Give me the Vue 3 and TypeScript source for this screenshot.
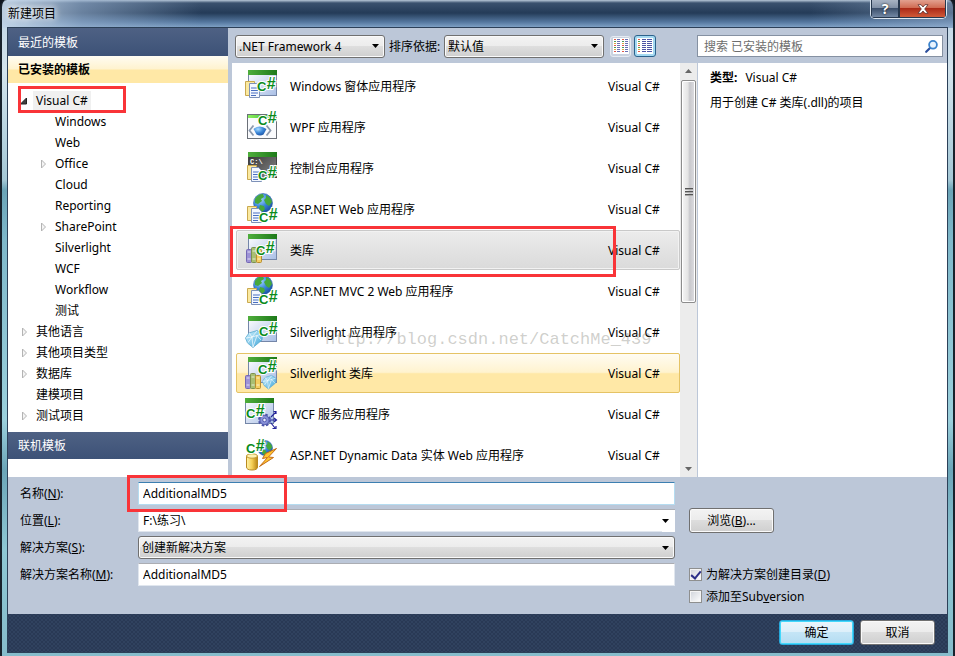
<script setup lang="ts">
import { ref } from 'vue'

interface TreeNode {
  label: string
  level: number
  state: 'open' | 'closed' | 'leaf'
}

interface Template {
  name: string
  icon: string
}

const tree: TreeNode[] = [
  { label: 'Visual C#', level: 0, state: 'open' },
  { label: 'Windows', level: 1, state: 'leaf' },
  { label: 'Web', level: 1, state: 'leaf' },
  { label: 'Office', level: 1, state: 'closed' },
  { label: 'Cloud', level: 1, state: 'leaf' },
  { label: 'Reporting', level: 1, state: 'leaf' },
  { label: 'SharePoint', level: 1, state: 'closed' },
  { label: 'Silverlight', level: 1, state: 'leaf' },
  { label: 'WCF', level: 1, state: 'leaf' },
  { label: 'Workflow', level: 1, state: 'leaf' },
  { label: '测试', level: 1, state: 'leaf' },
  { label: '其他语言', level: 0, state: 'closed' },
  { label: '其他项目类型', level: 0, state: 'closed' },
  { label: '数据库', level: 0, state: 'closed' },
  { label: '建模项目', level: 0, state: 'leaf' },
  { label: '测试项目', level: 0, state: 'closed' },
]

const templates: Template[] = [
  { name: 'Windows 窗体应用程序', icon: 'forms' },
  { name: 'WPF 应用程序', icon: 'wpf' },
  { name: '控制台应用程序', icon: 'console' },
  { name: 'ASP.NET Web 应用程序', icon: 'web' },
  { name: '类库', icon: 'library' },
  { name: 'ASP.NET MVC 2 Web 应用程序', icon: 'web' },
  { name: 'Silverlight 应用程序', icon: 'silverlight' },
  { name: 'Silverlight 类库', icon: 'silverlib' },
  { name: 'WCF 服务应用程序', icon: 'wcf' },
  { name: 'ASP.NET Dynamic Data 实体 Web 应用程序', icon: 'dynamic' },
]

// x and baseline of the language mark on each icon
const mark: Record<string, [number, number]> = {
  forms: [12, 21],
  wpf: [13, 14],
  console: [13, 28],
  web: [14, 29],
  library: [11, 21],
  silverlight: [14, 20],
  silverlib: [13, 17],
  wcf: [1, 20],
  dynamic: [1, 14],
}

const selected = ref(4)
const hovered = 7
const projectName = ref('AdditionalMD5')
const location = ref('F:\\练习\\')
const solutionName = ref('AdditionalMD5')
const makeDirectory = ref(true)
const addToSubversion = ref(false)
</script>

<template>
  <div class="window">
    <svg class="defs" width="0" height="0" aria-hidden="true">
      <defs>
        <linearGradient id="pane" x1="0" y1="0" x2="1" y2="1">
          <stop offset="0" stop-color="#ffffff" /><stop offset="1" stop-color="#a9bfe6" />
        </linearGradient>
        <linearGradient id="bar" x1="0" y1="0" x2="1" y2="0">
          <stop offset="0" stop-color="#4fae3c" /><stop offset="1" stop-color="#1e7a1a" />
        </linearGradient>
        <linearGradient id="barLight" x1="0" y1="0" x2="1" y2="0">
          <stop offset="0" stop-color="#8cf060" /><stop offset="1" stop-color="#2fae20" />
        </linearGradient>
        <linearGradient id="dark" x1="0" y1="0" x2="1" y2="1">
          <stop offset="0" stop-color="#303030" /><stop offset="1" stop-color="#8a8a8a" />
        </linearGradient>
        <radialGradient id="globe" cx="0.35" cy="0.3" r="0.8">
          <stop offset="0" stop-color="#a8dcff" /><stop offset="0.5" stop-color="#3b86d8" /><stop offset="1" stop-color="#174a9c" />
        </radialGradient>
        <linearGradient id="gem" x1="0" y1="0" x2="1" y2="1">
          <stop offset="0" stop-color="#d4f3ff" /><stop offset="1" stop-color="#3ba4d8" />
        </linearGradient>
        <linearGradient id="gold" x1="0" y1="0" x2="1" y2="0">
          <stop offset="0" stop-color="#fff3a8" /><stop offset="0.5" stop-color="#f5cf55" /><stop offset="1" stop-color="#b98412" />
        </linearGradient>
        <g id="docs">
          <path d="M.5 3.500h9v14h-9z" fill="#fbe9a0" stroke="#c9a950" />
          <path d="M4.500 5.500h7l3 3v11h-10z" fill="#f4f8ff" stroke="#7d91b8" />
          <path d="M6 10h7M6 12.500h7M6 15h7M6 17.500h5" stroke="#4a6fc0" />
        </g>
        <g id="books">
          <rect x=".5" y="2.500" width="5" height="13" rx="1" fill="#9d92d6" stroke="#7468b4" />
          <rect x="5.500" y=".5" width="5" height="15" rx="1" fill="#a9bf72" stroke="#7c9150" />
          <rect x="10.500" y="2.500" width="5" height="13" rx="1" fill="#f3cf62" stroke="#b98d30" />
          <path d="M1.500 5h3M1.500 12h3M6.500 4h3M6.500 12h3M11.500 5h3M11.500 12h3" stroke="#fff" stroke-opacity=".7" />
        </g>
        <g id="diamond">
          <path d="M.5 8 4 3 12 .5 17.500 4 17 10 8 17.500 2.500 13z" fill="url(#gem)" stroke="#58a9cf" stroke-width=".8" />
          <path d="M1 8 7 7 17 4M4 3 7 7 12 1M7 7 8 17 12 5.500 16 10M7 7 3 12.500" fill="none" stroke="#fff" stroke-width=".8" stroke-opacity=".85" />
        </g>
        <g id="earth">
          <circle cx="10" cy="10" r="9.500" fill="url(#globe)" stroke="#2b62a8" stroke-width=".6" />
          <path d="M2 6q3-5 8-5l1 3-3 2 1 2-4 3-3-1zM13 2q5 2 6 7l-3 4-3-2-2-4 2-2zM7 12l4 1 1 3-3 3-3-3z" fill="#46a83c" />
        </g>
      </defs>
    </svg>

    <header class="title-bar">
      <h1>新建项目</h1>
      <div class="caption-buttons">
        <button type="button" class="help" aria-label="帮助">?</button>
        <button type="button" class="close" aria-label="关闭">
          <svg width="12" height="10" viewBox="0 0 12 10"><path d="M1 .7h3l2 2.300 2-2.300h3L7.700 5 11 9.300H8L6 7 4 9.300H1L4.300 5z" fill="#fff" stroke="#5c3030" stroke-width=".8" /></svg>
        </button>
      </div>
    </header>

    <div class="dialog">
      <div class="main">
        <aside class="sidebar">
          <button type="button" class="section">最近的模板</button>
          <button type="button" class="section current">已安装的模板</button>
          <ul class="tree">
            <li v-for="(node, i) in tree" :key="node.label" :class="['node', 'level-' + node.level]">
              <svg class="arrow" width="8" height="10" viewBox="0 0 8 10" aria-hidden="true">
                <path v-if="node.state === 'open'" d="M6.500 2v6H.5z" fill="#404040" stroke="#222" />
                <path v-if="node.state === 'closed'" d="M2.500 1v8l4-4z" fill="#f4f4f4" stroke="#b4b4b4" />
              </svg>
              <button type="button" :class="{ active: i === 0 }">{{ node.label }}</button>
              <span v-if="i === 0" class="mark-box tree-mark"></span>
            </li>
          </ul>
          <button type="button" class="section">联机模板</button>
          <div class="rest"></div>
        </aside>

        <div class="content">
          <div class="toolbar">
            <span class="select framework">
              <select aria-label="框架版本"><option>.NET Framework 4</option></select>
              <svg width="7" height="4" viewBox="0 0 7 4"><path d="M0 0h7L3.500 4z" /></svg>
            </span>
            <label for="sort">排序依据:</label>
            <span class="select sort">
              <select id="sort"><option>默认值</option></select>
              <svg width="7" height="4" viewBox="0 0 7 4"><path d="M0 0h7L3.500 4z" /></svg>
            </span>
            <button type="button" class="view" aria-label="小图标">
              <svg width="16" height="16" viewBox="0 0 16 16">
                <rect width="16" height="16" fill="#fff" />
                <path d="M1 1.500h2M9 1.500h2M1 13.500h2M9 13.500h2M1 7.500h2M9 7.500h2" stroke="#e05a4a" />
                <path d="M1 3.500h2M9 3.500h2M1 9.500h2M9 9.500h2" stroke="#4e9b57" />
                <path d="M1 5.500h2M9 5.500h2M1 11.500h2M9 11.500h2" stroke="#d9a93c" />
                <path d="M4 1.500h3M4 3.500h3M4 5.500h3M4 7.500h3M4 9.500h3M4 11.500h3M4 13.500h3M12 1.500h3M12 3.500h3M12 5.500h3M12 7.500h3M12 9.500h3M12 11.500h3M12 13.500h3" stroke="#6a70b4" />
              </svg>
            </button>
            <button type="button" class="view on" aria-label="中等图标">
              <svg width="16" height="16" viewBox="0 0 16 16">
                <rect width="16" height="16" fill="#fff" />
                <path d="M1 1.500h2M1 7.500h2M1 13.500h2" stroke="#e05a4a" />
                <path d="M1 3.500h2M1 9.500h2" stroke="#4e9b57" />
                <path d="M1 5.500h2M1 11.500h2" stroke="#d9a93c" />
                <path d="M5 1.500h4M5 3.500h4M5 5.500h4M5 7.500h4M5 9.500h4M5 11.500h4M5 13.500h4M10 1.500h5M10 3.500h5M10 5.500h5M10 7.500h5M10 9.500h5M10 11.500h5M10 13.500h5" stroke="#4d55a4" />
              </svg>
            </button>
            <div class="search">
              <input type="search" placeholder="搜索 已安装的模板" aria-label="搜索已安装的模板" />
              <svg width="13" height="13" viewBox="0 0 13 13" aria-hidden="true">
                <path d="M5.500 7.500 1.200 11.800" stroke="#2c4f9c" stroke-width="2.200" stroke-linecap="round" />
                <circle cx="8" cy="4.800" r="3.900" fill="#e8f4ff" stroke="#3b83cc" stroke-width="1.800" />
              </svg>
            </div>
          </div>

          <div class="panes">
            <div class="list-pane">
              <ul class="templates">
                <li v-for="(t, i) in templates" :key="t.name">
                  <button type="button" :class="['item', { selected: i === selected, hovered: i === hovered }]" @click="selected = i">
                    <svg class="icon" width="32" height="32" viewBox="0 0 32 32" aria-hidden="true">
                      <g v-if="['forms', 'library', 'silverlight', 'silverlib', 'wcf'].includes(t.icon)">
                        <rect :x="t.icon === 'wcf' ? 0.5 : 3.5" y=".5" width="28" height="25" fill="url(#pane)" stroke="#7486a8" />
                        <rect :x="t.icon === 'wcf' ? 0 : 3" y="0" width="29" height="5" fill="url(#bar)" />
                      </g>
                      <g v-else-if="t.icon === 'wpf'">
                        <rect x="2.500" y="3.500" width="29" height="24" fill="#fafbfd" stroke="#6b7078" />
                        <rect x="3" y="4" width="28" height="3" fill="url(#barLight)" />
                        <path d="M8.500 14.500 4.500 19.500l4 5M21.500 14.500l4 5-4 5" fill="none" stroke="#8b98ad" stroke-width="1.800" />
                        <path d="M8.500 18q6-5 13 0l-3 5.500q-3.500 2-7 0z" fill="url(#globe)" />
                      </g>
                      <g v-else-if="t.icon === 'console'">
                        <rect x="3.500" y=".5" width="28" height="25" fill="url(#dark)" stroke="#444" />
                        <rect x="3" y="0" width="29" height="5" fill="url(#bar)" />
                        <text x="5" y="12" class="prompt">C:\</text>
                      </g>
                      <use v-else-if="t.icon === 'web'" href="#earth" x="8" y="0" />
                      <use v-if="t.icon === 'forms'" href="#docs" x="0" y="8" />
                      <use v-if="t.icon === 'console' || t.icon === 'web'" href="#docs" x="2" y="10" />
                      <use v-if="t.icon === 'library'" href="#books" x="1" y="13" />
                      <use v-if="t.icon === 'silverlib'" href="#books" x="0" y="16" />
                      <use v-if="t.icon === 'silverlight'" href="#diamond" x="0" y="14" />
                      <g v-if="t.icon === 'silverlib'" transform="translate(17 18) scale(.8)"><use href="#diamond" /></g>
                      <g v-if="t.icon === 'dynamic'">
                        <g transform="translate(12 1) scale(.8)"><use href="#earth" /></g>
                        <path d="M1.500 17v11q0 3 5.500 3t5.500-3V17z" fill="url(#gold)" stroke="#b98a20" />
                        <ellipse cx="7" cy="17" rx="5.500" ry="2.200" fill="#fff2b0" stroke="#c39a35" />
                        <path d="m31.500 9.500-11 5-3 5 5-1-8 9 14-9-5-.5z" fill="#ffc52e" stroke="#c56b17" />
                      </g>
                      <g v-if="t.icon === 'wcf'">
                        <path d="M24 22h7M26 19l5-5M26 25l4 5M28.500 13.500H31V16M29 20l2.500 2-2.500 2M27.500 30.500H31V28" fill="none" stroke="#23239a" stroke-width="1.200" />
                        <circle cx="19.500" cy="22" r="5.200" fill="#9da5e4" stroke="#4c55a8" stroke-width="2.600" stroke-dasharray="2.400 1.700" />
                        <circle cx="19.500" cy="22" r="4.600" fill="#8790d8" stroke="#555eae" />
                        <circle cx="19.500" cy="22" r="1.800" fill="#eef" stroke="#555eae" />
                      </g>
                      <text :x="mark[t.icon][0]" :y="mark[t.icon][1]" class="sharp">C<tspan class="hash" dy="-2">#</tspan></text>
                    </svg>
                    <span class="name">{{ t.name }}</span>
                    <span class="lang">Visual C#</span>
                  </button>
                  <span v-if="i === 4" class="mark-box item-mark"></span>
                </li>
              </ul>
              <div class="scrollbar" aria-hidden="true">
                <svg width="7" height="4" viewBox="0 0 7 4"><path d="M0 4h7L3.500 0z" fill="#666" /></svg>
                <div class="thumb"><i></i><i></i><i></i></div>
                <svg class="down" width="7" height="4" viewBox="0 0 7 4"><path d="M0 0h7L3.500 4z" fill="#666" /></svg>
              </div>
              <span class="watermark">http://blog.csdn.net/CatchMe_439</span>
            </div>
            <section class="details">
              <p><strong>类型:</strong>Visual C#</p>
              <p>用于创建 C# 类库(.dll)的项目</p>
            </section>
          </div>
        </div>
      </div>

      <form class="form" @submit.prevent>
        <div class="fields">
          <label for="name">名称(<u>N</u>):</label>
          <div class="field">
            <input id="name" v-model="projectName" class="focused" type="text" />
            <span class="mark-box name-mark"></span>
          </div>
          <label for="location">位置(<u>L</u>):</label>
          <div class="field combo">
            <input id="location" v-model="location" type="text" />
            <button type="button" aria-label="展开位置">
              <svg width="7" height="4" viewBox="0 0 7 4"><path d="M0 0h7L3.500 4z" /></svg>
            </button>
          </div>
          <label for="solution">解决方案(<u>S</u>):</label>
          <span class="select solution">
            <select id="solution"><option>创建新解决方案</option></select>
            <svg width="7" height="4" viewBox="0 0 7 4"><path d="M0 0h7L3.500 4z" /></svg>
          </span>
          <label for="solution-name">解决方案名称(<u>M</u>):</label>
          <div class="field"><input id="solution-name" v-model="solutionName" type="text" /></div>
        </div>
        <div class="side">
          <button type="button" class="push browse">浏览(<u>B</u>)...</button>
          <label class="check"><input v-model="makeDirectory" type="checkbox" /><span>为解决方案创建目录(<u>D</u>)</span></label>
          <label class="check"><input v-model="addToSubversion" type="checkbox" /><span>添加至Sub<u>v</u>ersion</span></label>
        </div>
      </form>

      <footer class="footer">
        <button type="button" class="push primary">确定</button>
        <button type="button" class="push">取消</button>
      </footer>
    </div>
  </div>
</template>

<style>
body {
  background: #10161f;
}
</style>

<style scoped>
* {
  box-sizing: border-box;
}

.window {
  display: flex;
  flex-direction: column;
  min-height: 100vh;
  padding: 0 6px 4px;
  border: solid #18222c;
  border-width: 0 2px;
  border-radius: 7px 7px 0 0;
  background:
    linear-gradient(90deg, rgba(200, 218, 236, 0.9) 0, rgba(150, 175, 205, 0.6) 80px, rgba(50, 75, 105, 0) 200px, rgba(50, 75, 105, 0) 85%, rgba(150, 175, 205, 0.5) 100%) 0 0 / 100% 28px no-repeat,
    linear-gradient(#b8c8d8 0, #3a516e 3px, #243b58 13px, #54779f 22px, #86a8cc 28px) 0 0 / 100% 28px no-repeat,
    linear-gradient(#bdd2e4 0, #d3e4ed 70px, #a5c8d6 180px, #6ba4b7 190px, #7fb8ca 240px, #9bd0dc 420px, #6ba5b8 470px, #8ec7d4 550px, #86bccb 100%);
  color: #000;
  font: 12px/21px "Noto Sans", "Noto Sans CJK SC", sans-serif;
}

.defs {
  position: absolute;
}

button,
input,
select {
  margin: 0;
  color: inherit;
  font: inherit;
}

ul {
  margin: 0;
  padding: 0;
  list-style: none;
}

.title-bar {
  display: flex;
  justify-content: space-between;
  align-items: flex-start;
  height: 28px;
}

h1 {
  margin: 3px 0 0;
  font-size: 12px;
  font-weight: 400;
  text-shadow: 0 0 6px #fff, 0 0 8px #fff;
}

.caption-buttons {
  display: flex;
  height: 19px;
  border: 1px solid #dce6f0;
  border-top: 0;
  border-radius: 0 0 5px 5px;
  overflow: hidden;
}

.caption-buttons button {
  display: flex;
  align-items: center;
  justify-content: center;
  padding: 0;
  border: 1px solid #26384e;
  border-top: 0;
  color: #fff;
  font-size: 14px;
  font-weight: 700;
  line-height: 16px;
  text-shadow: 0 0 2px #000;
}

.help {
  width: 28px;
  background: linear-gradient(#a8b4c4 0, #7f8fa5 48%, #3c506c 50%, #7388a4 100%);
}

.close {
  width: 47px;
  background: linear-gradient(#e2a090 0, #cf6850 48%, #ac2a18 50%, #d05a38 100%);
}

.dialog {
  display: flex;
  flex: 1;
  flex-direction: column;
  background: #bcc7d8;
  box-shadow: 0 0 0 1px #2c4058;
}

.main {
  display: flex;
  flex: 1;
  gap: 4px;
}

.sidebar {
  display: flex;
  flex-direction: column;
  width: 220px;
  background: #fff;
}

.section {
  height: 27px;
  padding: 0 10px;
  border: 0;
  background: linear-gradient(#4e6184, #3d5277);
  color: #fff;
  text-align: left;
}

.section:first-child {
  height: 28px;
}

.section.current {
  background: linear-gradient(#fffcf2 0, #fff3cf 48%, #ffe8a6 52%, #ffe8a6 100%);
  color: #000;
  font-weight: 700;
}

.tree {
  padding: 7px 0 6px 12px;
}

.rest {
  flex: 1;
}

.node {
  position: relative;
  display: flex;
  align-items: center;
  gap: 5px;
  height: 21px;
}

.level-1 {
  padding-left: 19px;
}

.node button {
  padding: 0 3px;
  border: 0;
  background: none;
  line-height: 20px;
}

.node button.active {
  background: #f0f0f0;
}

.mark-box {
  position: absolute;
  z-index: 2;
  border: 3px solid #f93438;
  pointer-events: none;
}

.tree-mark {
  top: -4px;
  left: -2px;
  width: 108px;
  height: 27px;
}

.content {
  display: flex;
  flex: 1;
  flex-direction: column;
  min-width: 0;
}

.toolbar {
  display: flex;
  align-items: center;
  height: 35px;
  padding: 1px 4px 0 3px;
}

.toolbar label {
  width: 59px;
  padding-left: 4px;
  white-space: nowrap;
}

.select {
  display: grid;
  align-items: center;
  height: 23px;
}

.select select,
.select svg {
  grid-area: 1 / 1;
}

.select select {
  width: 100%;
  height: 23px;
  padding: 0 18px 0 3px;
  border: 1px solid #707070;
  border-radius: 3px;
  appearance: none;
  background: linear-gradient(#f3f3f3 0, #ececec 50%, #dedede 50%, #cfcfcf 100%);
  box-shadow: inset 0 0 0 1px #fafafa;
}

.select svg {
  justify-self: end;
  margin-right: 6px;
  pointer-events: none;
}

.framework {
  width: 150px;
}

.sort {
  width: 160px;
  margin-right: 6px;
}

.view {
  display: flex;
  align-items: center;
  justify-content: center;
  width: 21px;
  height: 21px;
  margin-right: 3px;
  padding: 0;
  border: 1px solid #e6ebf2;
  border-radius: 3px;
  background: #c9d2e0;
}

.view.on {
  width: 22px;
  height: 22px;
  border-color: #2c628b;
  background: #a4d9f2;
}

.search {
  display: flex;
  align-items: center;
  width: 246px;
  height: 22px;
  margin-left: auto;
  padding: 0 4px 0 6px;
  border: 1px solid #8591a2;
  background: #fff;
}

.search input {
  flex: 1;
  min-width: 0;
  padding: 0;
  border: 0;
  outline: 0;
  background: none;
}

.search input::placeholder {
  color: #6d6d6d;
  opacity: 1;
}

.panes {
  display: flex;
  flex: 1;
}

.list-pane {
  position: relative;
  display: flex;
  flex: 1;
  min-width: 0;
  background: #fff;
}

.templates {
  flex: 1;
  padding: 3px 0 1px 4px;
}

.templates li {
  position: relative;
  padding-bottom: 1px;
}

.item {
  display: flex;
  align-items: center;
  width: 100%;
  height: 40px;
  padding: 0 16px 0 8px;
  border: 1px solid transparent;
  border-radius: 2px;
  background: none;
  text-align: left;
}

.item.selected {
  border-color: #c9c9c9;
  background: linear-gradient(#ececec, #dadada);
  box-shadow: inset 0 0 0 1px #f2f2f2;
}

.item.hovered {
  border-color: #e5c365;
  background: linear-gradient(#fffcf2 0, #fff3cf 48%, #ffe8a6 52%, #ffe8a6 100%);
}

.icon {
  margin-right: 13px;
  overflow: visible;
}

.sharp {
  fill: #0b8c1c;
  stroke: #fff;
  stroke-width: 2px;
  paint-order: stroke;
  font: 700 13px "Liberation Sans", sans-serif;
}

.hash {
  font-size: 16px;
  font-style: italic;
}

.prompt {
  fill: #fff;
  font: 700 7px "Liberation Mono", monospace;
}

.name {
  flex: 1;
  white-space: nowrap;
}

.lang {
  width: 55px;
  white-space: nowrap;
}

.item-mark {
  top: -4px;
  left: -6px;
  width: 386px;
  height: 51px;
}

.scrollbar {
  display: flex;
  flex-direction: column;
  align-items: center;
  width: 17px;
  padding: 6px 0;
  background: #ececec;
}

.thumb {
  display: flex;
  flex-direction: column;
  align-items: center;
  justify-content: center;
  gap: 1px;
  width: 15px;
  height: 223px;
  margin-top: 7px;
  border: 1px solid #8c8c8c;
  border-radius: 2px;
  background: linear-gradient(90deg, #f6f6f6 0, #e4e4e4 45%, #c8c8cc 60%, #dedee2 100%);
  box-shadow: inset 0 0 0 1px #fff;
}

.thumb i {
  width: 8px;
  height: 2px;
  border-top: 1px solid #555;
  background: #aaa;
}

.down {
  margin-top: auto;
}

.watermark {
  position: absolute;
  top: 266px;
  left: 93px;
  color: rgba(120, 120, 110, 0.36);
  font: 17px/21px "Liberation Mono", monospace;
  pointer-events: none;
}

.details {
  width: 250px;
  padding: 4px 12px;
  border-left: 1px solid #bcc7d8;
  background: #fff;
}

.details p {
  margin: 0 0 4px;
}

.details strong {
  margin-right: 8px;
}

.form {
  display: flex;
  gap: 14px;
}

.fields {
  display: grid;
  flex: 1;
  grid-template-columns: 118px 1fr;
  align-items: center;
  gap: 4px 0;
  padding: 5px 0 28px 12px;
}

.field {
  position: relative;
  display: flex;
  height: 23px;
  background: #fff;
}

.field input {
  flex: 1;
  min-width: 0;
  padding: 0 4px;
  border: 1px solid #e0e6ee;
  border-top-color: #abadb3;
  outline: 0;
  background: none;
}

.field input.focused {
  border-color: #3c7fb1 #b5dcf0 #b5dcf0;
}

.combo button {
  display: flex;
  align-items: center;
  width: 13px;
  padding: 0;
  border: 0;
  border-top: 1px solid #abadb3;
  background: none;
}

.combo input {
  border-right: 0;
}

.name-mark {
  top: -7px;
  left: -11px;
  width: 160px;
  height: 37px;
}

.side {
  display: flex;
  flex-direction: column;
  align-items: flex-start;
  width: 258px;
  padding: 31px 0 6px;
}

.push {
  width: 75px;
  height: 25px;
  padding: 0;
  border: 1px solid #707070;
  border-radius: 3px;
  background: linear-gradient(#f3f3f3 0, #ebebeb 50%, #dddddd 50%, #cfcfcf 100%);
  box-shadow: inset 0 0 0 1px #fafafa;
}

.push.browse {
  width: 85px;
  margin-bottom: 30px;
}

.push.primary {
  border-color: #27a9dc;
  background: linear-gradient(#eaf5fb 0, #dceffa 50%, #c4e5f6 50%, #b4dcf2 100%);
  box-shadow: inset 0 0 0 1px #43d8fb;
}

.check {
  display: flex;
  align-items: center;
  gap: 4px;
  height: 22px;
}

.check input {
  display: grid;
  width: 13px;
  height: 13px;
  border: 1px solid #8e8f8f;
  appearance: none;
  background: linear-gradient(135deg, #cfd3da, #fff);
  box-shadow: inset 0 0 0 1px #f4f4f4;
  place-items: center;
}

.check input:checked::before {
  width: 4px;
  height: 8px;
  border: solid #2b2f88;
  border-width: 0 2px 2px 0;
  content: "";
  transform: rotate(40deg);
}

.footer {
  display: flex;
  justify-content: flex-end;
  gap: 6px;
  padding: 6px 12px 7px;
  background-color: #293955;
  background-image: radial-gradient(#30425f 1px, transparent 1px), radial-gradient(#30425f 1px, transparent 1px);
  background-position: 0 0, 2px 2px;
  background-size: 4px 4px;
}
</style>
